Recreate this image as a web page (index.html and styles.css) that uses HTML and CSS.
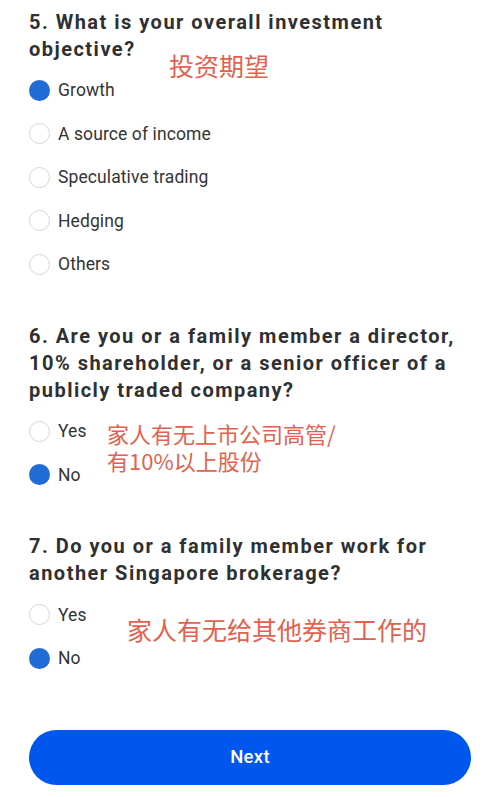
FILE: index.html
```html
<!DOCTYPE html>
<html>
<head>
<meta charset="utf-8">
<link rel="stylesheet" href="styles.css">
</head>
<body>
<main class="page">
  <section class="question">
    <h2 class="q-title">5. What is your overall investment objective?</h2>
    <ul class="options">
      <li class="option"><span class="radio checked"></span><span class="label">Growth</span></li>
      <li class="option"><span class="radio"></span><span class="label">A source of income</span></li>
      <li class="option"><span class="radio"></span><span class="label">Speculative trading</span></li>
      <li class="option"><span class="radio"></span><span class="label">Hedging</span></li>
      <li class="option"><span class="radio"></span><span class="label">Others</span></li>
    </ul>
    <p class="note note-1">投资期望</p>
  </section>

  <section class="question">
    <h2 class="q-title">6. Are you or a family member a director, 10% shareholder, or a senior officer of a publicly traded company?</h2>
    <ul class="options">
      <li class="option"><span class="radio"></span><span class="label">Yes</span></li>
      <li class="option"><span class="radio checked"></span><span class="label">No</span></li>
    </ul>
    <p class="note note-2">家人有无上市公司高管/<br>有10%以上股份</p>
  </section>

  <section class="question">
    <h2 class="q-title">7. Do you or a family member work for another Singapore brokerage?</h2>
    <ul class="options">
      <li class="option"><span class="radio"></span><span class="label">Yes</span></li>
      <li class="option"><span class="radio checked"></span><span class="label">No</span></li>
    </ul>
    <p class="note note-3">家人有无给其他券商工作的</p>
  </section>

  <button class="next-btn" type="button">Next</button>
</main>
</body>
</html>
```

FILE: styles.css
```css
* { box-sizing: border-box; }

html, body {
  margin: 0;
  padding: 0;
  background: #ffffff;
}

body {
  font-family: Roboto, "Noto Sans", "Noto Sans CJK SC", sans-serif;
  color: #333436;
}

.page {
  width: 500px;
  padding: 8.5px 29px 0 29px;
  display: flex;
  flex-direction: column;
}

.question {
  position: relative;
  margin-bottom: 36.5px;
}

.q-title {
  margin: 0 0 6px 0;
  font-size: 20px;
  font-weight: 700;
  line-height: 27px;
  letter-spacing: 1.48px;
  color: #2f3032;
}

.options {
  list-style: none;
  margin: 0;
  padding: 0;
}

.option {
  width: fit-content;
  height: 43.5px;
  display: flex;
  align-items: center;
  gap: 8px;
}

.radio {
  width: 21px;
  height: 21px;
  border-radius: 50%;
  border: 1.5px solid #d6d6d6;
  background: #fff;
  flex: none;
}

.radio.checked {
  border: none;
  background: #1f6cd6;
}

.label {
  font-size: 17.5px;
  font-weight: 400;
  color: #333436;
  letter-spacing: 0.1px;
}

.note {
  position: absolute;
  margin: 0;
  color: #e2624f;
  font-family: "Noto Sans CJK SC", "Noto Sans", sans-serif;
  font-weight: 400;
  white-space: nowrap;
}

.note-1 {
  left: 140px;
  top: 41px;
  font-size: 25px;
  line-height: 30px;
}

.note-2 {
  left: 78px;
  top: 97px;
  font-size: 22px;
  line-height: 27px;
}

.note-3 {
  left: 98px;
  top: 81px;
  font-size: 25px;
  line-height: 30px;
}

.next-btn {
  margin-top: 13px;
  width: 442px;
  height: 55px;
  border: none;
  border-radius: 28px;
  background: #0057ee;
  color: #ffffff;
  font-family: Roboto, "Noto Sans", sans-serif;
  font-size: 18.5px;
  font-weight: 500;
  letter-spacing: 0.3px;
}
```
